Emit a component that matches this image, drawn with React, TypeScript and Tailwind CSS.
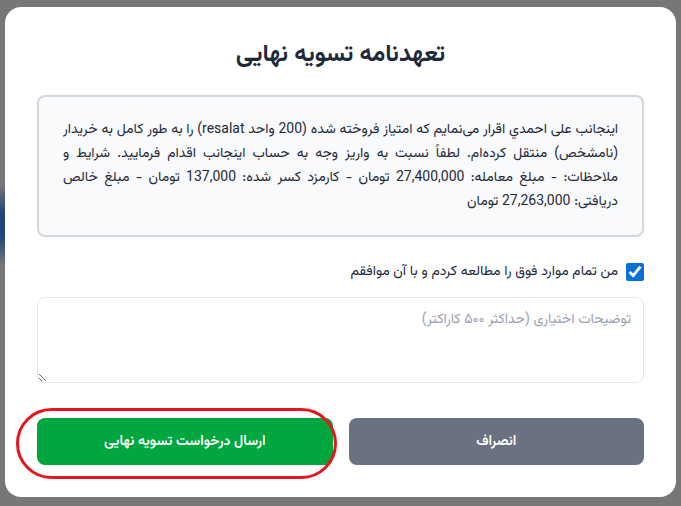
import { useState } from "react";

const body =
  "اینجانب علی احمدي اقرار می‌نمایم که امتیاز فروخته شده (200 واحد resalat) را به طور کامل به خریدار (نامشخص) منتقل کرده‌ام. لطفاً نسبت به واریز وجه به حساب اینجانب اقدام فرمایید. شرایط و ملاحظات: - مبلغ معامله: 27,400,000 تومان - کارمزد کسر شده: 137,000 تومان - مبلغ خالص دریافتی: 27,263,000 تومان";

export default function App() {
  const [agreed, setAgreed] = useState(true);
  const [note, setNote] = useState("");

  return (
    <div
      className="relative min-h-[506px] w-full bg-[#777777] flex items-start justify-center pt-[7px] px-[5px] font-['Vazirmatn','Noto_Sans_Arabic','Noto_Sans','DejaVu_Sans',sans-serif]"
    >
      {/* blurred page behind the overlay */}
      <div className="pointer-events-none absolute left-0 top-[185px] h-[80px] w-[8px] bg-[linear-gradient(to_bottom,#777777,#24457a_35%,#24457a_65%,#777777)]" />

      {/* Modal */}
      <div
        dir="rtl"
        className="relative w-full bg-white rounded-2xl p-8 text-gray-800"
      >
        <h2 className="text-center text-2xl leading-8 font-bold text-gray-800 mb-6">
          تعهدنامه تسویه نهایی
        </h2>

        <div className="bg-gray-50 border-2 border-gray-300 rounded-lg px-6 pt-[21px] pb-[21px]">
          <p className="text-sm leading-6 text-justify text-gray-800">{body}</p>
        </div>

        <label className="mt-[25px] flex items-center gap-2 cursor-pointer">
          <input
            type="checkbox"
            checked={agreed}
            onChange={(e) => setAgreed(e.target.checked)}
            className="w-[18px] h-[18px] accent-[#0b6fd8]"
          />
          <span className="text-sm text-gray-800">
            من تمام موارد فوق را مطالعه کردم و با آن موافقم
          </span>
        </label>

        <textarea
          value={note}
          onChange={(e) => setNote(e.target.value)}
          placeholder="توضیحات اختیاری (حداکثر ۵۰۰ کاراکتر)"
          className="mt-[15px] block w-full h-[86px] rounded-lg border border-gray-200 px-3 py-3 text-sm text-gray-800 placeholder:text-gray-400 outline-none"
        />

        {/* Actions */}
        <div className="mt-[35px] grid grid-cols-2 gap-4">
          <button className="h-[47px] rounded-lg bg-gray-500 text-white text-sm font-semibold">
            انصراف
          </button>
          <div className="relative">
            <button className="w-full h-[47px] rounded-lg bg-green-600 text-white text-sm font-semibold">
              ارسال درخواست تسویه نهایی
            </button>
            {/* annotation */}
            <div className="pointer-events-none absolute -left-[21px] -right-[4px] -top-[10px] -bottom-[14px] border-[3px] border-[#e4161d] rounded-[36px]" />
          </div>
        </div>
      </div>
    </div>
  );
}
